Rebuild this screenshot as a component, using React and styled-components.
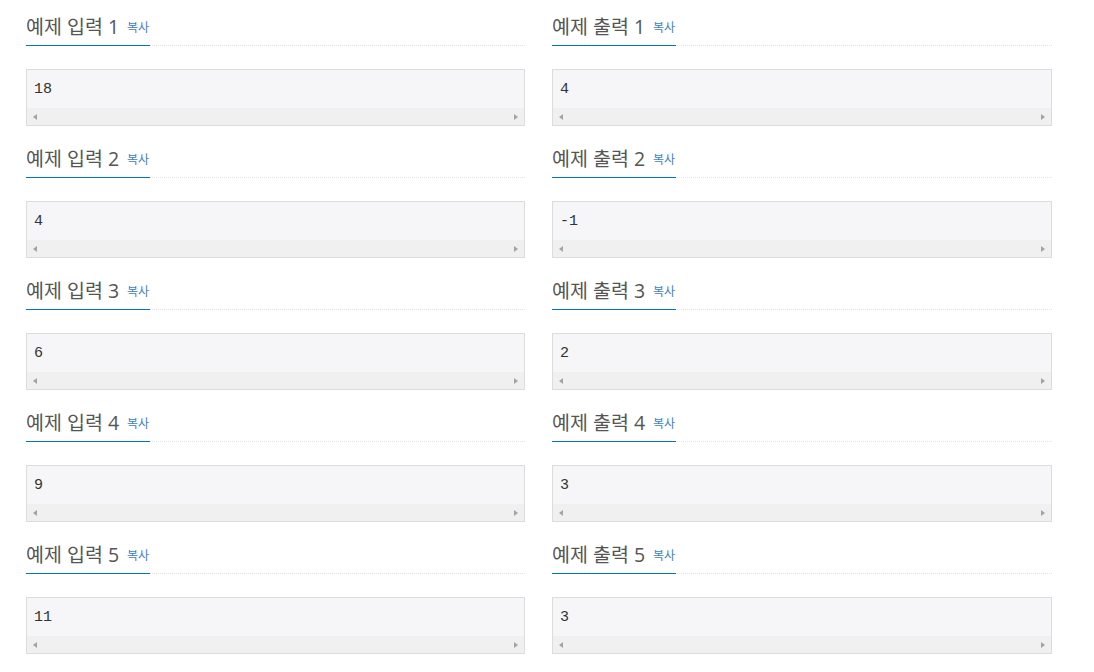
import React from "react";
import styled, { createGlobalStyle } from "styled-components";

const GlobalStyle = createGlobalStyle`
  body {
    margin: 0;
    background: #fff;
    font-family: "Open Sans", "Noto Sans CJK KR", sans-serif;
  }
`;

const Page = styled.div`
  width: 1026px;
  padding-left: 26px;
  display: grid;
  grid-template-columns: 499px 500px;
  column-gap: 27px;
`;

const Section = styled.section`
  padding-top: 16px;
  margin-bottom: 6px;
`;

const Headline = styled.div`
  border-bottom: 1px dotted #e3e3e3;
`;

const Title = styled.h2`
  display: inline-block;
  margin: 0 0 -1px;
  padding-bottom: 8px;
  font-size: 19.5px;
  line-height: 21px;
  font-weight: 400;
  color: #555;
  border-bottom: 1px solid #0076c0;
  font-family: "Open Sans", "Noto Sans CJK KR", sans-serif;
`;

const CopyButton = styled.span`
  margin-left: 8px;
  margin-right: 1px;
  font-size: 12px;
  color: #3f7fbf;
  vertical-align: 2px;
  font-family: "Noto Sans CJK KR", sans-serif;
`;

const SampleBox = styled.div`
  margin-top: 23px;
  border: 1px solid #dcdcdc;
  background: #f6f6f8;
`;

const SampleText = styled.pre`
  margin: 0;
  padding: 10px 8px 9px 7px;
  font-family: "Liberation Mono", "DejaVu Sans Mono", monospace;
  font-size: 15px;
  line-height: 19px;
  color: #333;
`;

const ScrollTrack = styled.div`
  height: 17px;
  background: #f0f0f0;
  display: flex;
  align-items: center;
  justify-content: space-between;
  padding: 0 6px;
`;

const Arrow = styled.span`
  width: 0;
  height: 0;
  border-top: 3.5px solid transparent;
  border-bottom: 3.5px solid transparent;
  ${(p) =>
    p.$dir === "left"
      ? "border-right: 4px solid #a3a3a3;"
      : "border-left: 4px solid #a3a3a3;"}
`;

const samples = [
  ["18", "4"],
  ["4", "-1"],
  ["6", "2"],
  ["9", "3"],
  ["11", "3"],
];

const Sample = ({ title, value }) => (
  <Section>
    <Headline>
      <Title>
        {title}
        <CopyButton>복사</CopyButton>
      </Title>
    </Headline>
    <SampleBox>
      <SampleText>{value}</SampleText>
      <ScrollTrack>
        <Arrow $dir="left" />
        <Arrow $dir="right" />
      </ScrollTrack>
    </SampleBox>
  </Section>
);

export default function App() {
  return (
    <>
      <GlobalStyle />
      <Page>
        {samples.map(([input, output], i) => (
          <React.Fragment key={i}>
            <Sample title={`예제 입력 ${i + 1}`} value={input} />
            <Sample title={`예제 출력 ${i + 1}`} value={output} />
          </React.Fragment>
        ))}
      </Page>
    </>
  );
}
